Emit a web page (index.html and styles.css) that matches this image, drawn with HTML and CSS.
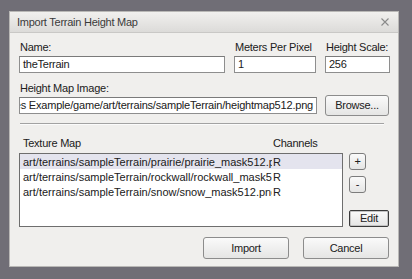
FILE: index.html
```html
<!DOCTYPE html>
<html>
<head>
<meta charset="utf-8">
<link rel="stylesheet" href="styles.css">
</head>
<body>
<div class="dialog">
  <div class="titlebar">
    <span class="title">Import Terrain Height Map</span>
    <svg class="close" width="8" height="8" viewBox="0 0 8 8"><path d="M0.5 0.5L7.5 7.5M7.5 0.5L0.5 7.5" stroke="#8a8a8a" stroke-width="1.1" fill="none"/></svg>
  </div>
  <div class="content">
    <div class="top-grid">
      <div class="label">Name:</div>
      <div class="label">Meters Per Pixel</div>
      <div class="label">Height Scale:</div>
      <div class="input">theTerrain</div>
      <div class="input">1</div>
      <div class="input">256</div>
    </div>
    <div class="label hm-label">Height Map Image:</div>
    <div class="browse-row">
      <div class="input path"><span>Stronghold Samples Example/game/art/terrains/sampleTerrain/heightmap512.png</span></div>
      <button class="btn browse">Browse...</button>
    </div>
    <div class="sep"></div>
    <div class="tex-header">
      <span class="col1">Texture Map</span>
      <span class="col2">Channels</span>
    </div>
    <div class="tex-area">
      <div class="list">
        <div class="row selected"><span class="cell1">art/terrains/sampleTerrain/prairie/prairie_mask512.png</span><span class="cell2">R</span></div>
        <div class="row"><span class="cell1">art/terrains/sampleTerrain/rockwall/rockwall_mask512.png</span><span class="cell2">R</span></div>
        <div class="row"><span class="cell1">art/terrains/sampleTerrain/snow/snow_mask512.png</span><span class="cell2">R</span></div>
      </div>
      <div class="side">
        <button class="btn small">+</button>
        <button class="btn small">-</button>
        <button class="btn edit">Edit</button>
      </div>
    </div>
    <div class="footer">
      <button class="btn big">Import</button>
      <button class="btn big">Cancel</button>
    </div>
  </div>
</div>
</body>
</html>
```

FILE: styles.css
```css
html, body {
  margin: 0;
  padding: 0;
  background: #706e76;
  width: 412px;
  height: 279px;
  overflow: hidden;
}
body {
  padding: 11px 0 0 9px;
  box-sizing: border-box;
  font-family: "Liberation Sans", Arial, sans-serif;
  font-size: 11px;
  letter-spacing: -0.25px;
  color: #202020;
}
.dialog {
  width: 390px;
  height: 256px;
  box-sizing: border-box;
  background: #f0efed;
  border: 1px solid #b9b8b6;
  display: flex;
  flex-direction: column;
}
.titlebar {
  height: 19px;
  flex: none;
  border-bottom: 1px solid #c9c8c6;
  background: linear-gradient(#f1f0ee, #dcdbd9);
  display: flex;
  align-items: center;
  justify-content: space-between;
  padding: 1px 9px 0 7px;
  box-sizing: content-box;
}
.title {
  color: #3a3a3a;
  line-height: 13px;
}
.close {
  display: block;
  margin-top: -1px;
}
.content {
  padding: 8px 9px 0 9px;
  display: flex;
  flex-direction: column;
}
.label {
  line-height: 13px;
  padding-left: 1px;
}
.top-grid {
  display: grid;
  grid-template-columns: 206px 82px 65px;
  column-gap: 9px;
  row-gap: 2px;
}
.input {
  height: 17px;
  box-sizing: border-box;
  background: #fff;
  border: 1px solid #8e8e8e;
  border-top-color: #7a7a7a;
  padding: 0 3px;
  line-height: 15px;
  white-space: nowrap;
  overflow: hidden;
}
.hm-label {
  margin-top: 9px;
}
.browse-row {
  display: flex;
  align-items: center;
  gap: 8px;
  height: 21px;
}
.path {
  width: 298px;
  display: flex;
  justify-content: flex-end;
  padding-right: 3px;
  letter-spacing: -0.2px;
}
.path span {
  flex: none;
}
.btn {
  font-family: inherit;
  font-size: 11px;
  letter-spacing: -0.25px;
  color: #202020;
  background: linear-gradient(#fafafa, #e5e5e4);
  border: 1px solid #8c8c8c;
  border-radius: 3px;
  padding: 0;
  margin: 0;
  box-sizing: border-box;
  line-height: 13px;
}
.browse {
  width: 64px;
  height: 21px;
}
.sep {
  height: 1px;
  background: #a2a2a2;
  margin: 7px 5px 0 1px;
  border-bottom: 1px solid #fbfbfb;
}
.tex-header {
  display: flex;
  margin-top: 12px;
  line-height: 13px;
}
.tex-header .col1 {
  width: 250px;
  padding-left: 4px;
}
.tex-area {
  display: flex;
  margin-top: 3px;
  gap: 6px;
}
.list {
  width: 325px;
  height: 74px;
  box-sizing: border-box;
  background: #fff;
  border: 1px solid #6e6e6e;
  letter-spacing: 0;
}
.row {
  height: 15px;
  display: flex;
  line-height: 16px;
  white-space: nowrap;
}
.row.selected {
  background: #e4e4ee;
}
.cell1 {
  width: 249px;
  padding-left: 3px;
  overflow: hidden;
  flex: none;
}
.cell2 {
  padding-left: 1px;
}
.side {
  display: flex;
  flex-direction: column;
  align-items: flex-start;
}
.small {
  width: 17px;
  height: 17px;
  border-color: #7c7c7c;
}
.small + .small {
  margin-top: 6px;
}
.edit {
  width: 40px;
  height: 17px;
  margin-top: 17px;
  border-color: #3a3a3a;
  border-radius: 2px;
  box-shadow: inset 0 0 0 1px #c4c4c4;
}
.footer {
  display: flex;
  justify-content: flex-end;
  gap: 14px;
  margin-top: 10px;
}
.big {
  width: 86px;
  height: 22px;
}
```
